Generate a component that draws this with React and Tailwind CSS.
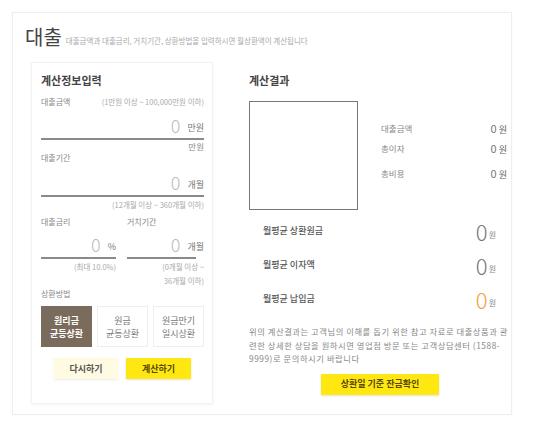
import React from 'react';

const KR = "font-['Noto_Sans_CJK_KR','Noto_Sans',sans-serif]";

// Input with big thin number and unit, underline below
const NumInput = ({ unit, unitW = 'w-auto', lineW = 'w-full' }) => (
  <div className="flex flex-col items-end">
    <div className="flex items-end justify-end h-[24px] pb-[3px] w-full">
      <span className="text-[18px] leading-[20px] font-extralight text-[#bbb]">0</span>
      <span className={`ml-[7px] text-[9px] leading-[14px] text-[#777] ${unitW}`}>{unit}</span>
    </div>
    <div className={`h-[2px] bg-[#8a8a8a] ${lineW} self-start`} />
  </div>
);

const SummaryRow = ({ label, className = '' }) => (
  <div className={`flex items-center justify-between h-[14px] ${className}`}>
    <span className="text-[8.5px] text-[#888]">{label}</span>
    <span className="text-[9px] text-[#666]">
      <span className="text-[11px] text-[#777]">0</span> 원
    </span>
  </div>
);

const MonthlyRow = ({ label, orange }) => (
  <div className="flex items-center justify-between h-[24px] pl-[14px] pr-[15px]">
    <span className="text-[9px] text-[#555] font-medium">{label}</span>
    <span className="flex items-end">
      <span className={`text-[22px] leading-[22px] font-extralight ${orange ? 'text-[#f0a040]' : 'text-[#777]'}`}>0</span>
      <span className="text-[8px] leading-[14px] text-[#888] ml-[1px]">원</span>
    </span>
  </div>
);

export default function App() {
  return (
    <div className={`w-[549px] h-[428px] bg-white pt-[12px] pl-[12px] ${KR}`}>
      <div className="w-[500px] h-[403px] border border-[#eeeeee] shadow-[0_0_2px_rgba(0,0,0,0.04)]">
        {/* header */}
        <div className="flex items-end pl-[12px] pt-[12px] h-[36px]">
          <span className="text-[20px] leading-[24px] text-[#444]">대출</span>
          <span className="ml-[4px] mb-[3px] text-[7.5px] leading-[10px] text-[#aaa]">
            대출금액과 대출금리, 거치기간, 상환방법을 입력하시면 월상환액이 계산됩니다
          </span>
        </div>

        <div className="flex mt-[13px]">
          {/* left panel */}
          <div className="ml-[18px] w-[182px] h-[342px] border border-[#f2f2f2] shadow-[0_1px_3px_rgba(0,0,0,0.05)] pl-[9px] pr-[8px] pt-[9px]">
            <div className="text-[11px] leading-[16px] font-bold text-[#444]">계산정보입력</div>

            <div className="mt-[8px] flex items-center h-[12px] text-[8px]">
              <span className="text-[#888]">대출금액</span>
              <span className="ml-auto text-[#aaa] text-[7.5px]">(1만원 이상 ~ 100,000만원 이하)</span>
            </div>
            <div className="mt-[6px]">
              <NumInput unit="만원" />
            </div>
            <div className="text-right text-[8.5px] leading-[12px] text-[#888]">만원</div>

            <div className="text-[8px] leading-[12px] text-[#888]">대출기간</div>
            <div className="mt-[7px]">
              <NumInput unit="개월" />
            </div>
            <div className="mt-[2px] text-right text-[7.5px] leading-[12px] text-[#aaa]">(12개월 이상 ~ 360개월 이하)</div>

            <div className="mt-[5px] flex justify-between">
              <div className="w-[75px]">
                <div className="text-[8px] leading-[12px] text-[#888]">대출금리</div>
                <div className="mt-[5px]">
                  <NumInput unit="%" />
                </div>
                <div className="text-right text-[7.5px] leading-[14px] text-[#aaa] mt-[1px]">(최대 10.0%)</div>
              </div>
              <div className="w-[77px]">
                <div className="text-[8px] leading-[12px] text-[#888]">거치기간</div>
                <div className="mt-[5px]">
                  <NumInput unit="개월" lineW="w-[69px]" />
                </div>
                <div className="text-right text-[7.5px] leading-[14px] text-[#aaa] mt-[1px]">
                  (0개월 이상 ~<br />36개월 이하)
                </div>
              </div>
            </div>

            <div className="text-[8px] leading-[12px] text-[#888]">상환방법</div>
            <div className="mt-[6px] grid grid-cols-3 gap-[5px] h-[41px]">
              <div className="bg-[#7b6b5c] flex items-center justify-center text-center text-white text-[9px] leading-[13px] font-bold">
                원리금<br />균등상환
              </div>
              <div className="border border-[#eeeeee] flex items-center justify-center text-center text-[#777] text-[9px] leading-[13px]">
                원금<br />균등상환
              </div>
              <div className="border border-[#eeeeee] flex items-center justify-center text-center text-[#777] text-[9px] leading-[13px]">
                원금만기<br />일시상환
              </div>
            </div>

            <div className="mt-[11px] flex justify-center gap-[8px]">
              <div className="w-[64px] h-[21px] bg-[#fffbe3] shadow-[0_1px_2px_rgba(0,0,0,0.08)] flex items-center justify-center text-[9px] font-bold text-[#555]">
                다시하기
              </div>
              <div className="w-[65px] h-[21px] bg-[#ffe812] shadow-[0_1px_2px_rgba(0,0,0,0.12)] flex items-center justify-center text-[9px] font-bold text-[#5a4a00]">
                계산하기
              </div>
            </div>
          </div>

          {/* right column */}
          <div className="ml-[36px] w-[262px] pt-[10px]">
            <div className="text-[11px] leading-[16px] font-bold text-[#444]">계산결과</div>

            <div className="mt-[13px] flex">
              <div className="w-[109px] h-[109px] border border-[#777]" />
              <div className="ml-[23px] flex-1 pr-[4px] pt-[20px]">
                <SummaryRow label="대출금액" />
                <SummaryRow label="총이자" className="mt-[6px]" />
                <SummaryRow label="총비용" className="mt-[11px]" />
              </div>
            </div>

            <div className="mt-[9px] flex flex-col gap-[10px]">
              <MonthlyRow label="월평균 상환원금" />
              <MonthlyRow label="월평균 이자액" />
              <MonthlyRow label="월평균 납입금" orange />
            </div>

            <p className="mt-[14px] text-[8.3px] leading-[13.5px] tracking-[0.55px] text-[#888]">
              위의 계산결과는 고객님의 이해를 돕기 위한 참고 자료로 대출상품과 관<wbr />련한 상세한 상담을 원하시면 영업점 방문 또는 고객상담센터 (1588-<wbr />9999)로 문의하시기 바랍니다
            </p>

            <div className="mt-[8px] flex justify-center">
              <div className="w-[118px] h-[21px] bg-[#ffe812] shadow-[0_1px_2px_rgba(0,0,0,0.12)] flex items-center justify-center text-[9px] font-bold text-[#5a4a00]">
                상환일 기준 잔금확인
              </div>
            </div>
          </div>
        </div>
      </div>
    </div>
  );
}
